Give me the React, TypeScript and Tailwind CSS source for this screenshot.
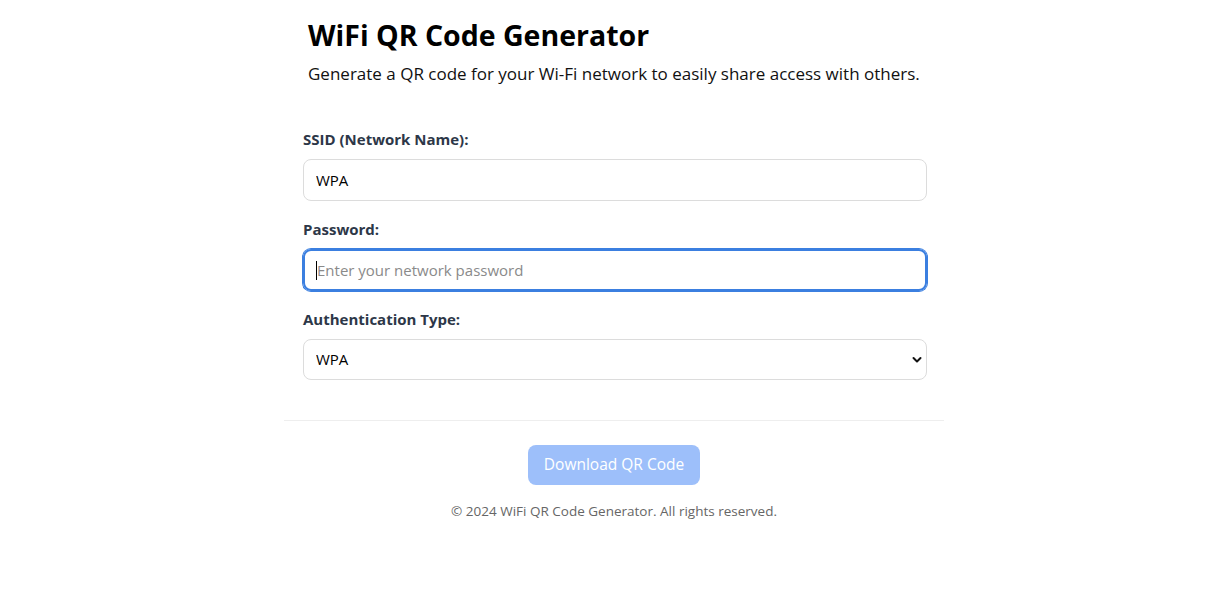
import { useState } from "react";

function ChevronDown() {
    return (
        <svg width="10" height="7" viewBox="0 0 10 7" fill="none" className="pointer-events-none absolute right-[5px] top-1/2 -translate-y-1/2">
            <path d="M1.5 1.5 L5 5 L8.5 1.5" stroke="#111" strokeWidth="2" strokeLinecap="round" strokeLinejoin="round" />
        </svg>
    );
}

export default function App() {
    const [ssid, setSsid] = useState("WPA");
    const [password, setPassword] = useState("");
    const [auth, setAuth] = useState("WPA");

    return (
        <div className="min-h-[608px] bg-white font-['Open_Sans',sans-serif]">
            <div className="mx-auto w-[660px] pt-[17px]">
                <header className="px-6">
                    <h1 className="text-[28.5px] leading-[36px] font-bold text-black">WiFi QR Code Generator</h1>
                    <p className="mt-[7px] whitespace-nowrap text-[17px] leading-[28px] text-[#111]">
                        Generate a QR code for your Wi-Fi network to easily share access with others.
                    </p>
                </header>

                <form className="pl-[19px] pr-[17px] pt-[40px] pb-[40px]" onSubmit={(e) => e.preventDefault()}>
                    <label className="block text-[15px] leading-[22px] font-bold text-[#2d3748]">SSID (Network Name):</label>
                    <input
                        className="mt-[9px] block h-[42px] w-full rounded-lg border border-[#dcdcdc] px-3 text-[15px] text-black outline-none"
                        value={ssid}
                        onChange={(e) => setSsid(e.target.value)}
                    />

                    <label className="mt-[17px] block text-[15px] leading-[22px] font-bold text-[#2d3748]">Password:</label>
                    <div className="relative mt-[9px]">
                        <input
                            type="password"
                            className="block h-[42px] w-full rounded-lg border-2 border-[#3b7fe0] px-3 text-[15px] text-black outline-none ring-1 ring-[#3b7fe0] placeholder:text-[#8a8a8a]"
                            placeholder="Enter your network password"
                            value={password}
                            onChange={(e) => setPassword(e.target.value)}
                        />
                        <span className="pointer-events-none absolute left-[13px] top-[12px] h-[19px] w-px bg-black" />
                    </div>

                    <label className="mt-[17px] block text-[15px] leading-[22px] font-bold text-[#2d3748]">Authentication Type:</label>
                    <div className="relative mt-[9px]">
                        <select
                            className="block h-[41px] w-full appearance-none rounded-lg border border-[#dcdcdc] bg-white px-3 text-[15px] text-black outline-none"
                            value={auth}
                            onChange={(e) => setAuth(e.target.value)}
                        >
                            <option>WPA</option>
                            <option>WEP</option>
                            <option>None</option>
                        </select>
                        <ChevronDown />
                    </div>
                </form>

                <footer className="flex flex-col items-center border-t border-[#eeeeee] pt-6">
                    <button
                        type="button"
                        disabled
                        className="h-10 rounded-lg bg-[#9dbffa] px-4 text-[15.5px] text-white"
                    >
                        Download QR Code
                    </button>
                    <p className="mt-4 text-[13.5px] leading-5 text-[#666]">© 2024 WiFi QR Code Generator. All rights reserved.</p>
                </footer>
            </div>
        </div>
    );
}
